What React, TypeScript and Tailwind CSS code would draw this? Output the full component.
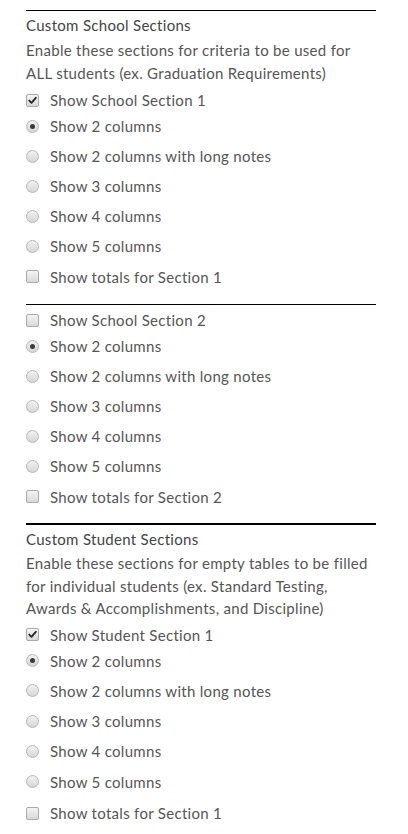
import React from "react";

function Checkbox({ checked }: { checked?: boolean }) {
  return (
    <span className="relative flex h-[13px] w-[13px] shrink-0 items-center justify-center rounded-[2px] border border-[#a9a9a9] bg-gradient-to-b from-[#f4f4f4] to-[#d9d9d9]">
      {checked && (
        <svg width="9" height="9" viewBox="0 0 9 9" className="block">
          <path d="M1.3 4.6 L3.5 6.8 L7.8 1.8" fill="none" stroke="#2a2a2a" strokeWidth="1.9" strokeLinecap="round" strokeLinejoin="round" />
        </svg>
      )}
    </span>
  );
}

function Radio({ checked }: { checked?: boolean }) {
  return (
    <span className="relative flex h-[13px] w-[13px] shrink-0 items-center justify-center rounded-full border border-[#b5b5b5] bg-gradient-to-b from-[#f2f2f2] to-[#d6d6d6]">
      {checked && <span className="block h-[5px] w-[5px] rounded-full bg-[#3a3a3a]" />}
    </span>
  );
}

function Row({ kind, checked, label, h }: { kind: "c" | "r"; checked?: boolean; label: string; h: string }) {
  return (
    <div className={`flex items-center gap-[11px] ${h}`}>
      {kind === "c" ? <Checkbox checked={checked} /> : <Radio checked={checked} />}
      <span className="text-[15px] leading-[20px] tracking-[0.3px] text-[#555]">{label}</span>
    </div>
  );
}

function Options({ section, checked, sec, wide }: { section: string; checked: boolean; sec: string; wide?: boolean }) {
  const rh = wide ? "h-[30.25px]" : "h-[30px]";
  return (
    <div className="flex flex-col">
      <Row kind="c" checked={checked} label={section} h="h-[22px]" />
      <Row kind="r" checked label="Show 2 columns" h={rh} />
      <Row kind="r" label="Show 2 columns with long notes" h={rh} />
      <Row kind="r" label="Show 3 columns" h={rh} />
      <Row kind="r" label="Show 4 columns" h={rh} />
      <Row kind="r" label="Show 5 columns" h={rh} />
      <Row kind="c" label={`Show totals for ${sec}`} h={wide ? "h-[33px]" : "h-[31px]"} />
    </div>
  );
}

export default function App() {
  return (
    <div className="min-h-[834px] bg-white" style={{ fontFamily: "Lato, 'Open Sans', sans-serif" }}>
      <div className="ml-[26px] w-[350px] pt-[10px]">
        <div className="border-t border-black pt-[4px]">
          <div className="text-[15px] leading-[20px] tracking-[0.3px] text-[#444]">Custom School Sections</div>
          <div className="mt-[4px] text-[15px] leading-[23px] tracking-[0.3px] text-[#555]">
            Enable these sections for criteria to be used for
            <br />
            ALL students (ex. Graduation Requirements)
          </div>
          <div className="mt-[4px]">
            <Options section="Show School Section 1" checked sec="Section 1" />
          </div>
        </div>
        <div className="mt-[12px] border-t border-black pt-[4px]">
          <Options section="Show School Section 2" checked={false} sec="Section 2" />
        </div>
        <div className="mt-[11px] border-t-2 border-black pt-[4px]">
          <div className="text-[15px] leading-[20px] tracking-[0.3px] text-[#444]">Custom Student Sections</div>
          <div className="mt-[3px] text-[15px] leading-[22.5px] tracking-[0.3px] text-[#555]">
            Enable these sections for empty tables to be filled
            <br />
            for individual students (ex. Standard Testing,
            <br />
            Awards &amp; Accomplishments, and Discipline)
          </div>
          <div className="mt-[4px]">
            <Options section="Show Student Section 1" checked sec="Section 1" wide />
          </div>
        </div>
      </div>
    </div>
  );
}
